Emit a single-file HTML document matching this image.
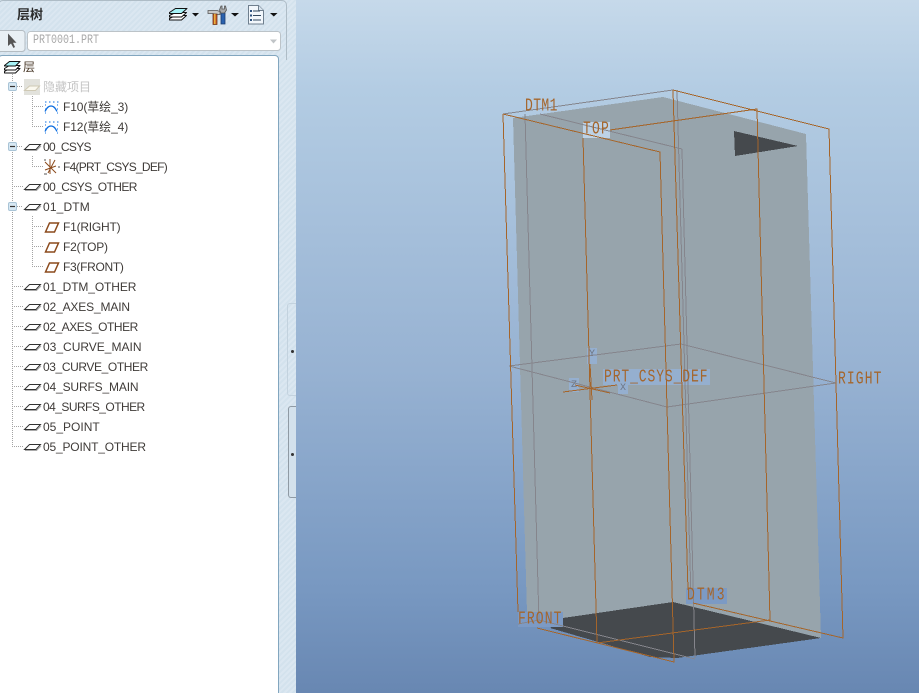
<!DOCTYPE html>
<html><head><meta charset="utf-8">
<style>
html,body{margin:0;padding:0;width:919px;height:693px;overflow:hidden;background:#d6e4ef}
body{position:relative;font-family:"Liberation Sans","Noto Sans CJK SC",sans-serif}
.a{position:absolute}
#strip{left:0;top:0;width:296px;height:693px;background:repeating-linear-gradient(135deg,#d3e2ed 0 2px,#dbe7f1 2px 4px)}
#view{left:296px;top:0;width:623px;height:693px;background:linear-gradient(#c6d9ea 0,#b3cce3 90px,#97b2d2 370px,#7898c1 590px,#6887b2 693px)}
#head{left:-2px;top:0;width:289px;height:60px;border:1px solid #aebcc6;border-radius:5px 5px 0 0;box-sizing:border-box;border-bottom:none}
#tree{left:-2px;top:55px;width:281px;height:650px;background:#fff;border:1px solid #82a6bf;border-radius:4px;box-sizing:border-box}
.t{position:absolute;font-size:12px;line-height:20px;height:20px;color:#3f3b38;white-space:nowrap}
.l{position:absolute;font-family:"Liberation Mono",monospace;color:#a5662c;font-size:13px;line-height:13px;white-space:nowrap;transform:scaleY(1.45);transform-origin:0 0}
.s{position:absolute;font-family:"Liberation Mono",monospace;font-size:10px;line-height:12px;color:#6d7686}
</style></head><body>
<div class="a" id="strip"></div>
<div class="a" id="head"></div>
<div class="a" style="left:17px;top:7px;font-size:13px;font-weight:700;color:#2b2b2b;line-height:16px">层树</div>

<svg class="a" style="left:0;top:0" width="296" height="56" viewBox="0 0 296 56">
  <g stroke="#111" stroke-width="1" stroke-linejoin="round">
    <path d="M169.500 18.500l6-3h11l-5 4.500h-12z" fill="#fff"/>
    <path d="M169.500 15.500l6-3h11l-5 4.500h-12z" fill="#fff"/>
    <path d="M169.500 12.500l6-4h11.500l-5.500 5h-12z" fill="#a6f2f6"/>
  </g>
  <path d="M192 13h7l-3.500 3.500z M231 13h8l-4 3.500z M270 13h7.500l-3.700 3.500z" fill="#111"/>
  <path d="M208 10.500h9l3 1v3h-5l-2-1h-5z" fill="#c7c9c9" stroke="#555" stroke-width=".8"/>
  <path d="M213 14h4v10.500h-4z" fill="#c9552a" stroke="#6b3a14" stroke-width=".8"/>
  <path d="M214 14h1.500v10h-1.500z" fill="#e6b13e"/>
  <path d="M221 13h4v11h-4z" fill="#2a62ae" stroke="#1c3c6d" stroke-width=".8"/>
  <path d="M219.500 10l1.500-4h1v3h2.500v-3h1l1 4-2 3h-3.500z" fill="#a8aaab" stroke="#555" stroke-width=".8"/>
  <path d="M248.500 5.500h10l5 5v13.500h-15z" fill="#f2f7fc" stroke="#6f7f8e"/>
  <path d="M258.500 5.500v5h5" fill="#d8e4ee" stroke="#6f7f8e"/>
  <path d="M253 11h7M253 15.500h8M253 20h8" stroke="#33495f"/>
  <path d="M250 10h2v2h-2zM250 14.500h2v2h-2zM250 19h2v2h-2z" fill="#2a4f7d"/>
  <rect x="-3" y="30.500" width="28" height="21" rx="3" fill="#e9f0f5" stroke="#b4bcc2"/>
  <path d="M8 33.500v12.500l3-2.500 2.500 4.500 1.500-1-2-4.200h3.500z" fill="#555"/>
  <rect x="27.500" y="31.500" width="253" height="19" rx="3" fill="#fff" stroke="#bcc3c8"/>
  <path d="M270 39.500h7l-3.500 4z" fill="#c0c4c7"/>
</svg>
<div class="a" style="left:33px;top:34px;font-family:'Liberation Mono',monospace;font-size:10px;line-height:12px;color:#a9a9a9;transform:scaleY(1.25);transform-origin:0 0">PRT0001.PRT</div>

<div class="a" id="tree"></div>

<svg class="a" style="left:0;top:56px" width="279" height="400" viewBox="0 56 279 400">
<defs>
  <g id="p">
    <path d="M0.500 7.500l5-5h11l-4.500 5z" fill="#fff" stroke="#333" stroke-width="1"/>
    <path d="M1 8.500h11.500l4.500-4.500" fill="none" stroke="#a8a8a8" stroke-width="1"/>
  </g>
  <g id="m">
    <rect x="-4" y="-4" width="8" height="8" rx="1.500" fill="#d7e8f3" stroke="#a9c4d6"/>
    <path d="M-2.500 0h5" stroke="#333" stroke-width="1.200"/>
  </g>
  <g id="f">
    <path d="M1.500 10l4-9h9l-4 9z" fill="#fff" stroke="#8b4a1c" stroke-width="1.500"/>
  </g>
  <g id="s">
    <path d="M1 9.500c1.500-3 3-5.500 6-5.500s4.500 2.500 6 5.500" fill="none" stroke="#0f6fe0" stroke-width="1.300"/>
    <path d="M1 0h1.500M5 0h1.500M9 0h1.500M13 0h1.500M1 3h1M13 3h1M1 7h1M13 7h1M1 11h1M13 11h1" stroke="#0f6fe0"/>
  </g>
</defs>
<g stroke="#a3a3a3" stroke-dasharray="1 1" fill="none">
  <path d="M12.500 74v372.500M32.500 96v31M32.500 156v11M32.500 216v51"/>
  <path d="M17 86.500h6M17 146.500h6M17 206.500h6M12 186.500h11M12 286.500h11M12 306.500h11M12 326.500h11M12 346.500h11M12 366.500h11M12 386.500h11M12 406.500h11M12 426.500h11M12 446.500h11"/>
  <path d="M32 106.500h11M32 126.500h11M32 166.500h11M32 226.500h11M32 246.500h11M32 266.500h11"/>
</g>
<g stroke="#111" stroke-width="1" stroke-linejoin="round">
  <path d="M4.500 71.500l5-3h10.500l-4.500 4.500h-11z" fill="#fff"/>
  <path d="M4.500 68.500l5-3h10.500l-4.500 4.500h-11z" fill="#fff"/>
  <path d="M4.500 65.500l5-4h10.500l-4.500 4.500h-11z" fill="#a6f2f6"/>
</g>
<rect x="24" y="79" width="16" height="16" fill="#e2e2dc"/>
<use href="#m" x="12.500" y="86.500"/>
<use href="#m" x="12.500" y="146.500"/>
<use href="#m" x="12.500" y="206.500"/>
<path d="M24.500 90.500l5-4.500h10l-4 4.500z" fill="#faf8ee" stroke="#cfc9b4"/>
<use href="#s" x="44" y="102"/>
<use href="#s" x="44" y="122"/>
<use href="#p" x="24" y="142"/>
<use href="#p" x="24" y="182"/>
<use href="#p" x="24" y="202"/>
<use href="#p" x="24" y="282"/>
<use href="#p" x="24" y="302"/>
<use href="#p" x="24" y="322"/>
<use href="#p" x="24" y="342"/>
<use href="#p" x="24" y="362"/>
<use href="#p" x="24" y="382"/>
<use href="#p" x="24" y="402"/>
<use href="#p" x="24" y="422"/>
<use href="#p" x="24" y="442"/>
<path d="M45 162l11 11M45 170l11-4M50 159v15M55 160l-7 13" stroke="#8b4a1c" stroke-width="1" fill="none"/>
<path d="M44 160h2M44 174h3M58 167h2" stroke="#555"/>
<use href="#f" x="44" y="222"/>
<use href="#f" x="44" y="242"/>
<use href="#f" x="44" y="262"/>
</svg>

<div class="t" style="left:23px;top:57px;color:#4a3a2a">层</div>
<div class="t" style="left:43px;top:77px;color:#c4c4c4">隐藏项目</div>
<div class="t" style="left:63px;top:97px;letter-spacing:-.1px">F10(草绘_3)</div>
<div class="t" style="left:63px;top:117px;letter-spacing:-.1px">F12(草绘_4)</div>
<div class="t" style="left:43px;top:137px;letter-spacing:-.7px">00_CSYS</div>
<div class="t" style="left:63px;top:157px;letter-spacing:-.74px">F4(PRT_CSYS_DEF)</div>
<div class="t" style="left:43px;top:177px;letter-spacing:-.58px">00_CSYS_OTHER</div>
<div class="t" style="left:43px;top:197px;letter-spacing:.15px">01_DTM</div>
<div class="t" style="left:63px;top:217px;letter-spacing:-.22px">F1(RIGHT)</div>
<div class="t" style="left:63px;top:237px;letter-spacing:-.25px">F2(TOP)</div>
<div class="t" style="left:63px;top:257px;letter-spacing:-.3px">F3(FRONT)</div>
<div class="t" style="left:43px;top:277px;letter-spacing:-.12px">01_DTM_OTHER</div>
<div class="t" style="left:43px;top:297px;letter-spacing:-.15px">02_AXES_MAIN</div>
<div class="t" style="left:43px;top:317px;letter-spacing:-.45px">02_AXES_OTHER</div>
<div class="t" style="left:43px;top:337px">03_CURVE_MAIN</div>
<div class="t" style="left:43px;top:357px;letter-spacing:-.4px">03_CURVE_OTHER</div>
<div class="t" style="left:43px;top:377px;letter-spacing:-.15px">04_SURFS_MAIN</div>
<div class="t" style="left:43px;top:397px;letter-spacing:-.55px">04_SURFS_OTHER</div>
<div class="t" style="left:43px;top:417px">05_POINT</div>
<div class="t" style="left:43px;top:437px;letter-spacing:-.18px">05_POINT_OTHER</div>

<div class="a" style="left:287px;top:303px;width:9px;height:93px;box-sizing:border-box;border:1px solid #c3d2de;border-right:none;border-radius:3px 0 0 3px"></div>
<div class="a" style="left:288px;top:406px;width:8px;height:92px;box-sizing:border-box;border:1px solid #8f9aa4;border-right:none;border-radius:3px 0 0 3px;background:#d3e1ec"></div>
<div class="a" style="left:291px;top:350px;width:3px;height:3px;border-radius:2px;background:#333"></div>
<div class="a" style="left:291px;top:453px;width:3px;height:3px;border-radius:2px;background:#333"></div>

<div class="a" id="view"></div>
<svg class="a" style="left:0;top:0" width="919" height="693" viewBox="0 0 919 693" shape-rendering="crispEdges">
  <path d="M513 118L663 97L806 134L821 638L673 602L563 618L527 613Z" fill="#97a4ac"/>
  <path d="M563 618L673 602L821 638L677 658L650 657L550 628Z" fill="#45494d"/>
  <path d="M734 131L798 146L735 156Z" fill="#45494d"/>
  <g>
    <rect x="583" y="122" width="27" height="16" fill="#bdd2e6"/>
    <rect x="603" y="369" width="107" height="16" fill="#95afcf"/>
    <rect x="587" y="348" width="10" height="16" fill="#95afcf"/>
    <rect x="569" y="378" width="10" height="14" fill="#95afcf"/>
    <rect x="618" y="384" width="10" height="10" fill="#95afcf"/>
    <rect x="518" y="612" width="45" height="15" fill="#7c9ac4"/>
    <rect x="686" y="588" width="41" height="16" fill="#7c9ac4"/>
  </g>
  <g fill="none" stroke="#85858c" stroke-width="1">
    <path d="M503 114L673 90"/>
    <path d="M540 114L682 149"/>
    <path d="M525 114L539 622"/>
    <path d="M677 90L691 598"/>
    <path d="M682 149L695 658"/>
    <path d="M518 624L539 620L695 659"/>
    <path d="M509 366L681 344L836 383L667 407Z"/>
  </g>
  <g fill="none" stroke="#a5652a" stroke-width="1">
    <path d="M503 114L660 152L674 662L537 628"/>
    <path d="M503 114L518 612"/>
    <path d="M583 138L597 643L770 620L757 109L610 130"/>
    <path d="M673 90L829 129L843 638L693 603"/>
    <path d="M673 90L688 590"/>
    <path d="M563 392L617 385M575 385L610 393M590 364L592 400"/>
  </g>
</svg>
<div class="l" style="left:525px;top:96px;letter-spacing:.4px">DTM1</div>
<div class="l" style="left:583px;top:119px;letter-spacing:1.2px">TOP</div>
<div class="l" style="left:604px;top:367px;letter-spacing:.9px">PRT_CSYS_DEF</div>
<div class="l" style="left:838px;top:369px;letter-spacing:1.1px">RIGHT</div>
<div class="l" style="left:518px;top:609px;letter-spacing:1.1px">FRONT</div>
<div class="l" style="left:687px;top:585px;letter-spacing:2.1px">DTM3</div>
<div class="s" style="left:589px;top:349px">Y</div>
<div class="s" style="left:571px;top:380px">Z</div>
<div class="s" style="left:620px;top:383px">X</div>
</body></html>
